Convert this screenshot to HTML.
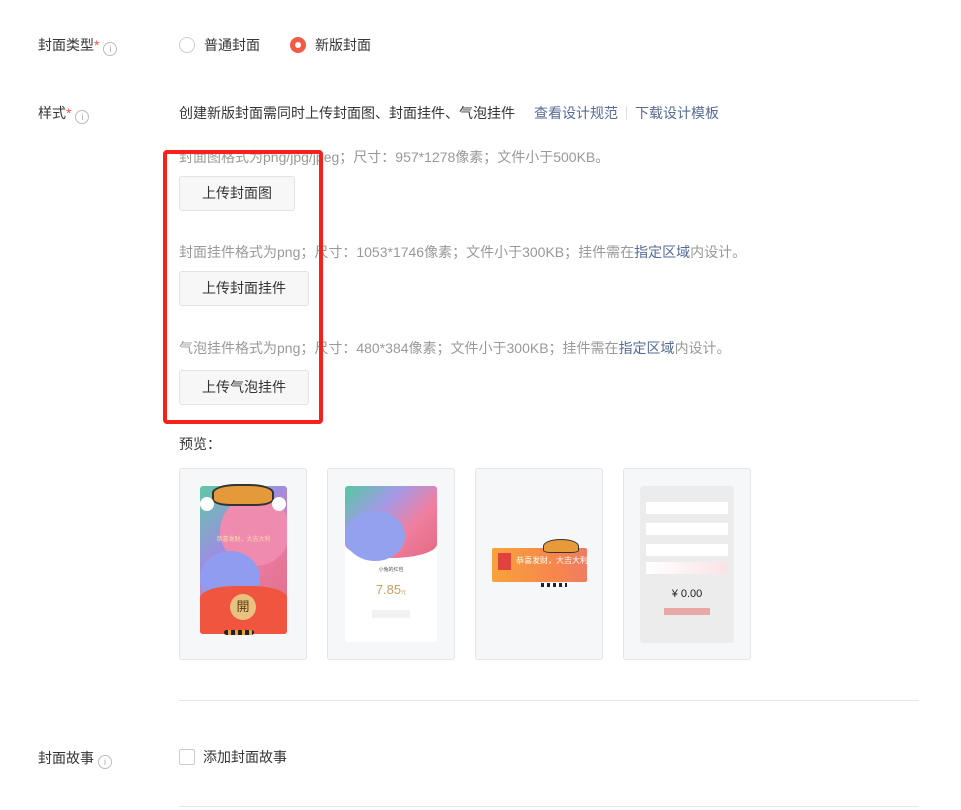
<!DOCTYPE html>
<html><head><meta charset="utf-8"><style>
*{margin:0;padding:0;box-sizing:border-box}
body{width:961px;height:810px;background:#fff;position:relative;overflow:hidden;font-family:"Liberation Sans","Noto Sans CJK SC",sans-serif;font-size:14px;color:#353535}
.a{position:absolute;white-space:nowrap;line-height:20px}
.lbl{left:38px;color:#353535}
.lbl i{color:#fa5151;font-style:normal}
.info{display:inline-block;width:14px;height:14px;border:1px solid #bbb;border-radius:50%;font-size:9px;line-height:12px;text-align:center;color:#aaa;vertical-align:-2px;margin-left:4px;font-style:normal}
.g{color:#999}
.lk{color:#576b95}
.btn{position:absolute;left:179px;height:35px;border:1px solid #e3e3e3;border-radius:3px;background:#f7f7f7;text-align:center;line-height:33px;color:#353535}
.card{position:absolute;top:468px;width:128px;height:192px;background:#f6f7f9;border:1px solid #e4e6ea;border-radius:3px;overflow:hidden}
.hr{position:absolute;left:179px;width:740px;height:1px;background:#e7e7e7}
</style></head><body>
<div class="a lbl" style="top:35px">封面类型<i>*</i><span class="info">i</span></div>
<div class="a" style="left:179px;top:35px"><span style="display:inline-block;width:16px;height:16px;border:1px solid #ccc;border-radius:50%;vertical-align:-3px"></span><span style="margin-left:9px">普通封面</span></div>
<div class="a" style="left:290px;top:35px"><span style="display:inline-block;width:16px;height:16px;background:#f25a45;border-radius:50%;vertical-align:-3px;position:relative"><span style="position:absolute;left:5px;top:5px;width:6px;height:6px;background:#fff;border-radius:50%"></span></span><span style="margin-left:9px">新版封面</span></div>

<div class="a lbl" style="top:103px">样式<i>*</i><span class="info">i</span></div>
<div class="a" style="left:179px;top:103px">创建新版封面需同时上传封面图、封面挂件、气泡挂件<span class="lk" style="margin-left:19px">查看设计规范</span><span style="display:inline-block;width:1px;height:14px;background:#ddd;margin:0 8px;vertical-align:-2px"></span><span class="lk">下载设计模板</span></div>

<div class="a g" style="left:179px;top:147px">封面图格式为png/jpg/jpeg；尺寸：957*1278像素；文件小于500KB。</div>
<div class="btn" style="top:176px;width:116px">上传封面图</div>
<div class="a g" style="left:179px;top:242px">封面挂件格式为png；尺寸：1053*1746像素；文件小于300KB；挂件需在<span class="lk">指定区域</span>内设计。</div>
<div class="btn" style="top:271px;width:130px">上传封面挂件</div>
<div class="a g" style="left:179px;top:338px">气泡挂件格式为png；尺寸：480*384像素；文件小于300KB；挂件需在<span class="lk">指定区域</span>内设计。</div>
<div class="btn" style="top:370px;width:130px">上传气泡挂件</div>

<div style="position:absolute;left:163px;top:150px;width:160px;height:274px;border:4px solid #f5211a;border-radius:4px"></div>

<div class="a" style="left:179px;top:434px">预览：</div>

<div class="card" style="left:179px">
 <div style="position:absolute;left:20px;top:17px;width:87px;height:148px;border-radius:3px;overflow:hidden;background:linear-gradient(135deg,#5fc9a6 0%,#9c8fe0 35%,#e87aa0 60%,#e26a7d 100%)">
  <div style="position:absolute;left:20px;top:10px;width:70px;height:70px;border-radius:50%;background:#f08bb0"></div>
  <div style="position:absolute;left:0;top:65px;width:60px;height:55px;border-radius:50%;background:#8f9cf0"></div>
  <div style="position:absolute;left:0;bottom:0;width:87px;height:48px;background:#f0553f;border-radius:40% 40% 0 0/12px 12px 0 0"></div>
  <div style="position:absolute;left:30px;top:108px;width:26px;height:26px;border-radius:50%;background:#e9c27f;text-align:center;line-height:26px;font-size:13px;color:#5a3b1a">開</div>
  <div style="position:absolute;left:0;top:48px;width:87px;text-align:center;font-size:6px;color:#f6e0a0">恭喜发财，大吉大利</div>
 </div>
 <div style="position:absolute;left:32px;top:15px;width:62px;height:22px;border-radius:40% 40% 30% 30%;background:#e49a3a;border:2px solid #333"></div>
 <div style="position:absolute;left:20px;top:28px;width:14px;height:14px;border-radius:50%;background:#fff"></div>
 <div style="position:absolute;left:92px;top:28px;width:14px;height:14px;border-radius:50%;background:#fff"></div>
 <div style="position:absolute;left:44px;top:161px;width:30px;height:5px;background:repeating-linear-gradient(90deg,#222 0 4px,#e7a23c 4px 7px);border-radius:3px"></div>
</div>

<div class="card" style="left:327px">
 <div style="position:absolute;left:17px;top:17px;width:92px;height:156px;background:#fff;border-radius:3px;overflow:hidden">
  <div style="position:absolute;left:0;top:0;width:92px;height:72px;background:linear-gradient(135deg,#55c8a0 0%,#a39ae6 35%,#f07fa0 65%,#e46880 100%);border-radius:0 0 50% 50%/0 0 14px 14px"></div>
  <div style="position:absolute;left:0;top:25px;width:60px;height:50px;border-radius:50%;background:#93a2ef"></div>
  <div style="position:absolute;left:0;top:80px;width:92px;text-align:center;font-size:5px;color:#555">小兔的红包</div>
  <div style="position:absolute;left:0;top:96px;width:92px;text-align:center;font-size:13px;color:#c9a062;line-height:15px">7.85<span style="font-size:5px">元</span></div>
  <div style="position:absolute;left:27px;top:124px;width:38px;height:8px;background:#f2f2f2"></div>
 </div>
</div>

<div class="card" style="left:475px">
 <div style="position:absolute;left:16px;top:79px;width:95px;height:34px;background:linear-gradient(90deg,#f7a23b,#f6854e 70%,#ee7d63);border-radius:2px"></div>
 <div style="position:absolute;left:22px;top:84px;width:13px;height:17px;background:#e0433b"></div>
 <div style="position:absolute;left:40px;top:87px;font-size:8px;color:#fff;line-height:10px">恭喜发财，大吉大利</div>
 <div style="position:absolute;left:67px;top:70px;width:36px;height:14px;border-radius:50% 50% 20% 20%;background:#e69a3a;border:1px solid #333"></div>
 <div style="position:absolute;left:65px;top:114px;width:26px;height:4px;background:repeating-linear-gradient(90deg,#222 0 3px,#fff 3px 6px)"></div>
</div>

<div class="card" style="left:623px">
 <div style="position:absolute;left:16px;top:17px;width:94px;height:157px;background:#ececec;border-radius:3px">
  <div style="position:absolute;left:6px;top:16px;width:82px;height:12px;background:#fff"></div>
  <div style="position:absolute;left:6px;top:37px;width:82px;height:12px;background:#fff"></div>
  <div style="position:absolute;left:6px;top:58px;width:82px;height:12px;background:#fff"></div>
  <div style="position:absolute;left:6px;top:76px;width:82px;height:12px;background:linear-gradient(90deg,#fff,#fbe2e6)"></div>
  <div style="position:absolute;left:0;top:102px;width:94px;text-align:center;font-size:11px;color:#222;line-height:13px">¥ 0.00</div>
  <div style="position:absolute;left:24px;top:122px;width:46px;height:7px;background:#e8a9a6"></div>
 </div>
</div>

<div class="hr" style="top:700px"></div>
<div class="a lbl" style="top:748px">封面故事<span class="info">i</span></div>
<div class="a" style="left:179px;top:747px"><span style="display:inline-block;width:16px;height:16px;border:1px solid #ccc;border-radius:2px;vertical-align:-3px"></span><span style="margin-left:8px">添加封面故事</span></div>
<div class="hr" style="top:806px"></div>
</body></html>
